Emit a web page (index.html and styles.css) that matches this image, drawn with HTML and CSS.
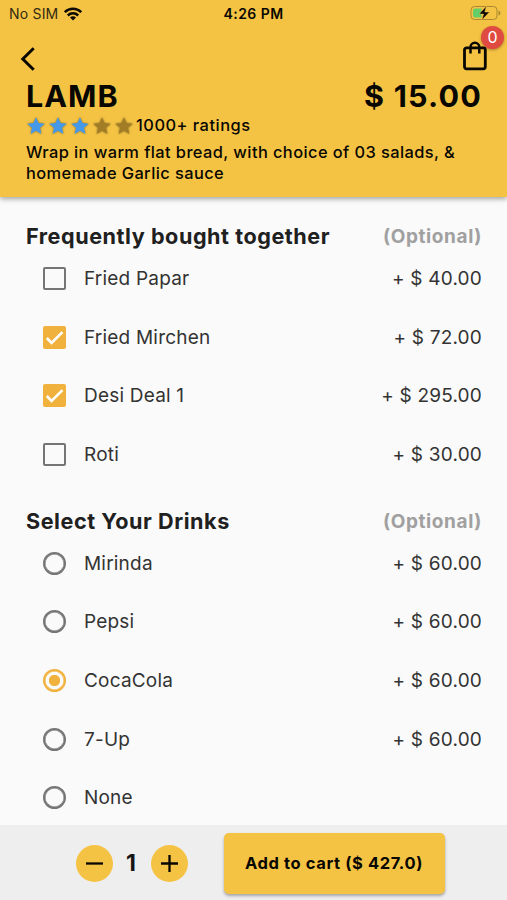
FILE: index.html
```html
<!DOCTYPE html>
<html lang="en">
<head>
<meta charset="utf-8">
<title>Lamb</title>
<link rel="stylesheet" href="styles.css">
</head>
<body>
<svg class="defs" aria-hidden="true">
  <symbol id="star" viewBox="0 0 22 22"><path d="M11 2.200l2.500 5.900 6.300.6-4.800 4.100 1.400 6.300-5.400-3.300-5.400 3.300L7 12.800 2.200 8.700l6.300-.6z"/></symbol>
  <symbol id="check" viewBox="0 0 22 22"><path d="M3.600 11.500l4.600 4.600L18.600 5.800" fill="none" stroke="#fff" stroke-width="2.500"/></symbol>
</svg>
<header class="header">
  <div class="status">
    <div class="carrier"><span>No SIM</span>
      <svg class="wifi" viewBox="0 0 18 14"><g fill="none" stroke="#0c0a02" stroke-width="2.500"><path d="M.8 5.200a11.700 11.700 0 0 1 16.400 0"/><path d="M3.800 8.500a7.400 7.400 0 0 1 10.400 0"/></g><path d="M9 13.600l-3-3.100a4.200 4.200 0 0 1 6 0z" fill="#0c0a02"/></svg>
    </div>
    <span class="time">4:26 PM</span>
    <svg class="battery" viewBox="0 0 31 16"><rect x="1" y="1.500" width="26" height="13" rx="3.500" fill="none" stroke="#aa8932"/><path d="M5 3.500h6.500v9H5a2 2 0 0 1-2-2v-5a2 2 0 0 1 2-2z" fill="#62ce69"/><path d="M28.500 5.500v5q2-.7 2-2.500t-2-2.500z" fill="#aa8932"/><path d="M16.500 1L9 9h4.600l-1.800 6L19.500 7h-4.700z" fill="#080702" stroke="#f5c344" stroke-width=".5"/></svg>
  </div>
  <div class="nav">
    <svg class="back" viewBox="0 0 16 26"><path d="M13.700 2.200L2.800 13l10.900 10.800" fill="none" stroke="#080702" stroke-width="3"/></svg>
    <div class="cart">
      <svg class="bag" viewBox="0 0 24 30"><rect x="1.500" y="6.800" width="20.800" height="21" rx="2" fill="none" stroke="#080702" stroke-width="2.800"/><path d="M7.500 12.500V6.200a4.400 4.400 0 0 1 8.800 0v6.300" fill="none" stroke="#080702" stroke-width="2.500"/></svg>
      <span class="badge">0</span>
    </div>
  </div>
  <div class="title"><h1>LAMB</h1><span class="amount">$ 15.00</span></div>
  <div class="rating">
    <svg class="star on"><use href="#star"/></svg><svg class="star on"><use href="#star"/></svg><svg class="star on"><use href="#star"/></svg><svg class="star"><use href="#star"/></svg><svg class="star"><use href="#star"/></svg>
    <span class="count">1000+ ratings</span>
  </div>
  <p class="desc">Wrap in warm flat bread, with choice of 03 salads, &amp;<br>homemade Garlic sauce</p>
</header>
<main class="options">
  <section>
    <div class="heading first"><h2>Frequently bought together</h2><span class="optional">(Optional)</span></div>
    <div class="row"><span class="box"></span><span class="name">Fried Papar</span><span class="price">+ $ 40.00</span></div>
    <div class="row"><span class="box checked"><svg><use href="#check"/></svg></span><span class="name">Fried Mirchen</span><span class="price">+ $ 72.00</span></div>
    <div class="row"><span class="box checked"><svg><use href="#check"/></svg></span><span class="name">Desi Deal 1</span><span class="price">+ $ 295.00</span></div>
    <div class="row"><span class="box"></span><span class="name">Roti</span><span class="price">+ $ 30.00</span></div>
  </section>
  <section>
    <div class="heading"><h2>Select Your Drinks</h2><span class="optional">(Optional)</span></div>
    <div class="row"><span class="radio"></span><span class="name">Mirinda</span><span class="price">+ $ 60.00</span></div>
    <div class="row"><span class="radio"></span><span class="name">Pepsi</span><span class="price">+ $ 60.00</span></div>
    <div class="row"><span class="radio selected"></span><span class="name">CocaCola</span><span class="price">+ $ 60.00</span></div>
    <div class="row"><span class="radio"></span><span class="name">7-Up</span><span class="price">+ $ 60.00</span></div>
    <div class="row"><span class="radio"></span><span class="name">None</span></div>
  </section>
</main>
<footer class="bar">
  <button class="round"><svg viewBox="0 0 37 37"><path d="M10 18.500h17"/></svg></button>
  <span class="qty">1</span>
  <button class="round"><svg viewBox="0 0 37 37"><path d="M10 18.500h17M18.500 10v17"/></svg></button>
  <button class="add">Add to cart ($ 427.0)</button>
</footer>
</body>
</html>
```
FILE: styles.css
```css
* { box-sizing: border-box; margin: 0; padding: 0; }
body {
  width: 507px; height: 900px; overflow: hidden;
  display: flex; flex-direction: column;
  background: #fafafa; color: #333;
  font-family: Inter, "Liberation Sans", sans-serif;
}
svg { display: block; flex: none; }
.defs { position: absolute; width: 0; height: 0; }
.header {
  position: relative; z-index: 1; flex: none; height: 197px; padding: 0 26px;
  background: #f5c344; color: #080702;
  box-shadow: 0 2px 5px rgba(0, 0, 0, .35);
}
.status {
  display: grid; grid-template-columns: 1fr auto 1fr; align-items: center;
  height: 27px; margin: 0 -20px 0 -17px; font-size: 14px;
}
.carrier { display: flex; align-items: center; gap: 6px; color: #322a12; letter-spacing: .2px; }
.wifi { width: 18px; height: 14px; }
.time { font-weight: 600; letter-spacing: .45px; margin-left: -3px; }
.battery { width: 31px; height: 16px; justify-self: end; margin-top: -1px; }
.nav { display: flex; justify-content: space-between; height: 53px; }
.back { width: 16px; height: 26px; margin: 19px 0 0 -6px; }
.cart { position: relative; margin: 14px -6px 0 0; }
.bag { width: 24px; height: 30px; }
.badge {
  position: absolute; left: 18px; top: -15px; width: 23px; height: 23px;
  border-radius: 50%; background: #df4b41; color: #fff;
  font-size: 16px; line-height: 23px; text-align: center;
  box-shadow: 0 1px 3px rgba(0, 0, 0, .3);
}
.title { display: flex; justify-content: space-between; height: 32px; line-height: 32px; }
h1, .amount { font-size: 30.500px; font-weight: 700; letter-spacing: 1px; }
.amount { margin-right: -1px; letter-spacing: 1.200px; }
.rating { display: flex; align-items: center; height: 26px; margin-left: -1px; }
.star { width: 22px; height: 22px; margin-top: 1px; fill: #a27d26; filter: drop-shadow(0 0 1px rgba(70, 60, 20, .6)); }
.star.on { fill: #4599e8; }
.count, .desc { font-size: 16.400px; font-weight: 500; letter-spacing: .42px; }
.count { letter-spacing: .5px; margin-left: 1px; }
.desc { margin-top: 4px; line-height: 21px; white-space: nowrap; }
.options { flex: 1; min-height: 0; overflow: hidden; }
.heading {
  display: flex; justify-content: space-between; align-items: flex-end;
  height: 50.200px; padding: 0 25px 0 26px; line-height: 26px;
}
.heading.first { height: 52.400px; }
h2 { font-size: 21.600px; font-weight: 700; letter-spacing: .55px; color: #202020; }
.optional { font-size: 19px; font-weight: 700; letter-spacing: .6px; line-height: 25px; color: #a0a0a0; }
.row { display: flex; align-items: center; height: 58.600px; padding: 0 25px 0 43px; font-size: 19px; letter-spacing: .2px; }
.box, .radio { flex: none; width: 23px; height: 23px; margin-right: 18px; border: 2px solid #757575; }
.box { border-radius: 2px; }
.box.checked { border: 0; background: #f0b23d; }
.box svg { width: 23px; height: 23px; }
.radio { border-radius: 50%; box-shadow: inset 0 0 0 .5px #757575; }
.radio.selected { border-color: #f0b23d; box-shadow: inset 0 0 0 .5px #f0b23d; background: radial-gradient(circle, #f0b23d 5.300px, transparent 6px); }
.price { margin-left: auto; }
.bar { display: flex; align-items: flex-start; flex: none; height: 75px; padding: 8px 0 0 76px; background: #eee; }
button { border: 0; background: #f5c344; color: #080702; font-family: inherit; }
.round { width: 37px; height: 37px; margin-top: 12px; border-radius: 50%; }
.round svg { width: 37px; height: 37px; fill: none; stroke: #080702; stroke-width: 2.300; }
.qty { width: 38px; padding-right: 2px; margin-top: 12px; line-height: 37px; text-align: center; font-size: 23px; font-weight: 700; color: #151515; }
.add {
  width: 221px; height: 61px; margin-left: 35.500px; padding-bottom: 1px; border-radius: 5px;
  font-size: 16.500px; font-weight: 700; letter-spacing: .6px;
  box-shadow: 0 2px 3px rgba(0, 0, 0, .3);
}
```
